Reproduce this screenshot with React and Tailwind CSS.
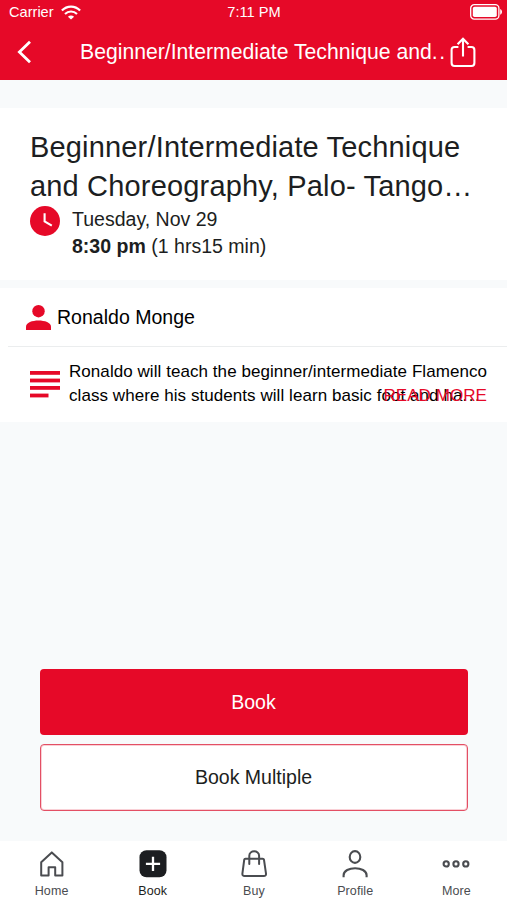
import React from "react";

function WifiIcon() {
  return (
    <svg width="20" height="15" viewBox="0 0 20 15" fill="none" stroke="white">
      <path d="M0.9 5.6C6 0.2 14 0.2 19.1 5.6" strokeWidth="2.2" />
      <path d="M4 9C7.4 5.6 12.6 5.6 16 9" strokeWidth="2.1" />
      <path d="M10 14.6L6.9 11.7C8.6 10.1 11.4 10.1 13.1 11.7Z" fill="white" stroke="none" />
    </svg>
  );
}

function BatteryIcon() {
  return (
    <svg width="33" height="16" viewBox="0 0 33 16" fill="none">
      <rect x="0.7" y="0.7" width="28.2" height="14.4" rx="3.6" stroke="white" strokeWidth="1.3" />
      <rect x="2.8" y="2.8" width="24" height="10.2" rx="1.8" fill="white" />
      <path d="M30.2 5C32.6 6 32.6 9.8 30.2 10.8Z" fill="white" />
    </svg>
  );
}

function ShareIcon() {
  return (
    <svg width="26" height="31" viewBox="0 0 26 31" fill="none" stroke="white" strokeWidth="2.1">
      <path d="M8.4 10H4.6Q1.6 10 1.6 13V26Q1.6 29 4.6 29H21.4Q24.4 29 24.4 26V13Q24.4 10 21.4 10H17.6" />
      <path d="M13 19.6V2.2M7.6 7.2L13 1.8L18.4 7.2" />
    </svg>
  );
}

function HomeIcon() {
  return (
    <svg width="28" height="28" viewBox="0 0 28 28" fill="none" stroke="currentColor" strokeWidth="2" strokeLinejoin="round">
      <path d="M3.2 12.3L13.8 2.4L24.4 12.3V25.5H17.2V17.2H10.6V25.5H3.2Z" />
    </svg>
  );
}

function BookIcon() {
  return (
    <svg width="28" height="28" viewBox="0 0 28 28" fill="none">
      <rect x="0.5" y="0.2" width="27" height="27" rx="7" fill="#1c1e21" />
      <path d="M14 6.8V21M6.9 13.9H21.1" stroke="white" strokeWidth="2.3" />
    </svg>
  );
}

function BagIcon() {
  return (
    <svg width="28" height="28" viewBox="0 0 28 28" fill="none" stroke="currentColor" strokeWidth="2" strokeLinecap="round" strokeLinejoin="round">
      <path d="M5.4 8.7H22.6Q23.8 8.7 24 9.8L26 23.6Q26.2 26 23.8 26H4.6Q2.2 26 2.4 23.6L4.2 9.8Q4.4 8.7 5.4 8.7Z" />
      <path d="M9.3 14V5.8C9.3 -0.2 19.1 -0.2 19.1 5.8V14" />
    </svg>
  );
}

function ProfileIcon() {
  return (
    <svg width="28" height="28" viewBox="0 0 28 28" fill="none" stroke="currentColor" strokeWidth="2.1">
      <ellipse cx="14" cy="7" rx="5.3" ry="5.9" />
      <path d="M2.6 27.2V25.3C2.6 15.9 25.6 15.9 25.6 25.3V27.2" />
    </svg>
  );
}

function MoreIcon() {
  return (
    <svg width="28" height="28" viewBox="0 0 28 28" fill="none" stroke="currentColor" strokeWidth="2.1">
      <circle cx="4.2" cy="13.9" r="2.6" />
      <circle cx="14" cy="13.9" r="2.6" />
      <circle cx="23.8" cy="13.9" r="2.6" />
    </svg>
  );
}

const tabs = [
  { label: "Home", icon: HomeIcon },
  { label: "Book", icon: BookIcon, active: true },
  { label: "Buy", icon: BagIcon },
  { label: "Profile", icon: ProfileIcon },
  { label: "More", icon: MoreIcon },
];

export default function App() {
  return (
    <div className="w-[507px] h-[900px] flex flex-col overflow-hidden bg-[#f8fafb] text-[#1c1e21] font-['Liberation_Sans',Arial,sans-serif]">
      <header className="h-20 shrink-0 bg-[#e60928] text-white">
        <div className="h-6 grid grid-cols-[1fr_auto_1fr] items-center pl-[9px] pr-[8px]">
          <div className="flex items-center gap-[7px]">
            <span className="text-[14.6px] leading-6">Carrier</span>
            <WifiIcon />
          </div>
          <span className="text-[14.6px] leading-6">7:11 PM</span>
          <div className="flex justify-end -mr-1">
            <BatteryIcon />
          </div>
        </div>
        <div className="h-14 flex items-center">
          <svg className="ml-[16px] shrink-0" width="16" height="24" viewBox="0 0 16 24" fill="none" stroke="white" strokeWidth="2.8">
            <path d="M14 1.8L3.4 12L14 22.2" />
          </svg>
          <h1 className="ml-[48px] w-[370px] shrink-0 text-[21.2px] whitespace-nowrap">
            Beginner/Intermediate Technique and<span className="tracking-[1.6px]">..</span>
          </h1>
          <ShareIcon />
        </div>
      </header>

      <section className="mt-7 h-[172px] shrink-0 bg-white pl-[30px] pt-5">
        <h2 className="text-[29px] leading-[39px] tracking-[0.17px] whitespace-nowrap">
          Beginner/Intermediate Technique
          <br />
          and Choreography, Palo- Tango…
        </h2>
        <div className="flex">
          <svg className="mt-[-0.5px] shrink-0" width="30" height="30" viewBox="0 0 30 30" fill="none">
            <circle cx="15" cy="15" r="15" fill="#e60928" />
            <path d="M14.6 7.3V15.4L21.8 19.6" stroke="white" strokeWidth="2.1" />
          </svg>
          <div className="ml-3 text-[19.55px] leading-[27px]">
            <p>Tuesday, Nov 29</p>
            <p>
              <b>8:30 pm</b> (1 hrs15 min)
            </p>
          </div>
        </div>
      </section>

      <section className="mt-2 h-[134px] shrink-0 bg-white pl-2 text-black">
        <div className="h-[59px] flex items-center border-b border-[#ebedee] pl-[18px]">
          <svg className="shrink-0" width="25" height="25" viewBox="0 0 25 25" fill="#e60928">
            <circle cx="12.5" cy="6.2" r="6.2" />
            <path d="M0 25V21.6C0 13.4 25 13.4 25 21.6V25Z" />
          </svg>
          <span className="ml-[6px] mt-[2px] text-[19.55px]">Ronaldo Monge</span>
        </div>
        <div className="relative flex pl-[22px] pt-[13px]">
          <svg className="mt-[10.5px] shrink-0" width="30" height="28" viewBox="0 0 30 28" fill="#e60928">
            <rect y="0" width="30" height="3.8" />
            <rect y="7.6" width="30" height="3.8" />
            <rect y="15" width="30" height="3.8" />
            <rect y="22.6" width="18.5" height="3.8" />
          </svg>
          <p className="ml-[9px] text-[17px] leading-[24px] tracking-[0.06px] whitespace-nowrap">
            Ronaldo will teach the beginner/intermediate Flamenco
            <br />
            class where his students will learn basic foot and ha
            <span className="tracking-[1.6px]">...</span>
          </p>
          <span className="absolute right-[20px] top-[36px] text-[17.1px] leading-[25px] text-[#e60928]">
            READ MORE
          </span>
        </div>
      </section>

      <div className="mt-auto flex flex-col gap-[9px] px-[39.5px] pb-[30px] text-[19.55px]">
        <button className="h-[66px] rounded-[4px] bg-[#e60928] pt-px text-white">Book</button>
        <button className="h-[67px] rounded-[4px] border border-[#e34f64] bg-white pt-px shadow-[inset_0_0_0_1px_#f9d0d6]">
          Book Multiple
        </button>
      </div>

      <nav className="h-[59px] shrink-0 grid grid-cols-5 bg-white pl-px">
        {tabs.map(({ label, icon: Icon, active }) => (
          <div
            key={label}
            className={`flex flex-col items-center pt-[9px] ${active ? "text-[#1c1e21]" : "text-[#4a4c50]"}`}
          >
            <Icon />
            <span className="mt-[5px] text-[12.5px] leading-4 tracking-[0.1px]">{label}</span>
          </div>
        ))}
      </nav>
    </div>
  );
}
